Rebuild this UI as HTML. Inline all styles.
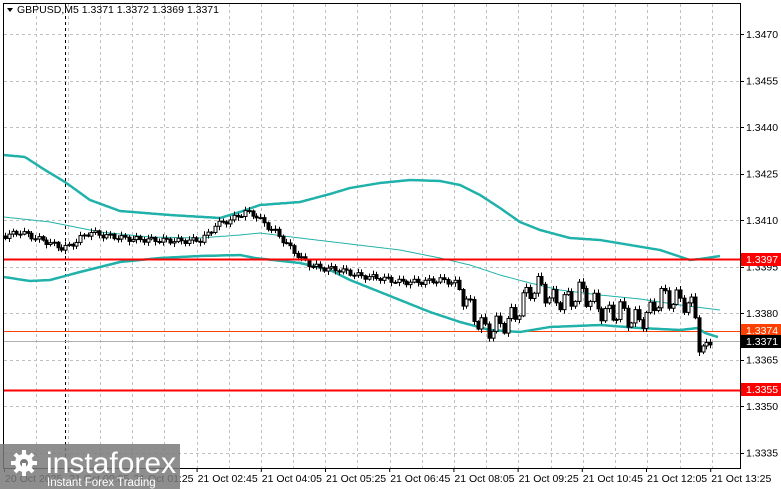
<!DOCTYPE html>
<html><head><meta charset="utf-8">
<style>
body{margin:0;width:781px;height:489px;background:#fff;overflow:hidden;position:relative;font-family:"Liberation Sans",sans-serif;}
svg{position:absolute;left:0;top:0}
.t{font-size:10.5px;fill:#000;font-family:"Liberation Sans",sans-serif}
</style></head><body>
<svg id="s" width="781" height="489" xmlns="http://www.w3.org/2000/svg">
<g id="grid" stroke="#c0c0c0" stroke-dasharray="3,3" stroke-width="1"></g>
<line x1="65.5" y1="4" x2="65.5" y2="468" stroke="#000" stroke-dasharray="3,3"/>
<line x1="4" y1="331.5" x2="740" y2="331.5" stroke="#ff4000" stroke-width="1"/>
<line x1="4" y1="341.5" x2="740" y2="341.5" stroke="#b0b0b0" stroke-width="1"/>
<g id="bands" fill="none" stroke="#20b2aa"></g>
<g id="candles"></g>
<line x1="4" y1="259.5" x2="740" y2="259.5" stroke="#ff0000" stroke-width="2"/>
<line x1="4" y1="390.5" x2="740" y2="390.5" stroke="#ff0000" stroke-width="2"/>
<rect x="3.5" y="3.5" width="737" height="465" fill="none" stroke="#000"/>
<g id="axis"></g>
<path d="M7 8 L13 8 L10 12 Z" fill="#000"/>
<text x="17" y="13" class="t" style="font-size:10.5px">GBPUSD,M5  1.3371 1.3372 1.3369 1.3371</text>
<rect x="741" y="253" width="40" height="13" fill="#ff0000"/>
<text x="746" y="263" class="t" style="fill:#fff">1.3397</text>
<rect x="741" y="324" width="40" height="13" fill="#ff4000"/>
<text x="746" y="334" class="t" style="fill:#fff">1.3374</text>
<rect x="741" y="335" width="40" height="13" fill="#000"/>
<text x="746" y="345" class="t" style="fill:#fff">1.3371</text>
<rect x="741" y="383" width="40" height="13" fill="#ff0000"/>
<text x="746" y="393" class="t" style="fill:#fff">1.3355</text>
<g>
<rect x="0" y="444" width="180" height="45" fill="#7a7a7a" opacity="0.85"/>
<g fill="#fff">
<circle cx="24" cy="463" r="9"/>
<g stroke="#fff" stroke-width="4">
<line x1="24" y1="450" x2="24" y2="476"/><line x1="11" y1="463" x2="37" y2="463"/>
<line x1="15" y1="454" x2="33" y2="472"/><line x1="33" y1="454" x2="15" y2="472"/>
</g>
<circle cx="24" cy="463" r="4" fill="#7a7a7a"/>
<rect x="22" y="463" width="4" height="12" fill="#fff"/>
<text x="46" y="473" style="font-family:'Liberation Sans',sans-serif;font-size:30px;fill:#fff">instaforex</text>
<text x="47" y="486" style="font-family:'Liberation Sans',sans-serif;font-size:11.5px;fill:#fff">Instant Forex Trading</text>
</g>
</g>
</svg>
<script>
(function(){
var NS="http://www.w3.org/2000/svg";
function el(p,t,a,txt){var e=document.createElementNS(NS,t);for(var k in a)e.setAttribute(k,a[k]);if(txt)e.textContent=txt;document.getElementById(p).appendChild(e);return e;}
for(var x=35.5;x<740;x+=32.2)el("grid","line",{x1:Math.round(x)+.5,y1:4,x2:Math.round(x)+.5,y2:468});
var prices=["1.3470","1.3455","1.3440","1.3425","1.3410","1.3395","1.3380","1.3365","1.3350","1.3335"];
for(var i=0;i<10;i++){var y=34+i*46.5;el("grid","line",{x1:4,y1:Math.round(y)+.5,x2:740,y2:Math.round(y)+.5});
el("axis","line",{x1:740,y1:Math.round(y)+.5,x2:744,y2:Math.round(y)+.5,stroke:"#000"});
el("axis","text",{x:746,y:y+4,"class":"t"},prices[i]);}
var tl=["20 Oct 2025","21 Oct 00:05","21 Oct 01:25","21 Oct 02:45","21 Oct 04:05","21 Oct 05:25","21 Oct 06:45","21 Oct 08:05","21 Oct 09:25","21 Oct 10:45","21 Oct 12:05","21 Oct 13:25"];
for(var i=0;i<12;i++){el("axis","text",{x:5+i*64.2,y:482,"class":"t"},tl[i]);el("axis","line",{x1:4.5+i*64.2,y1:468,x2:4.5+i*64.2,y2:472,stroke:"#000"});}
function interp(pts,x){for(var i=0;i<pts.length-1;i++){if(x<=pts[i+1][0]){var a=pts[i],b=pts[i+1];return a[1]+(b[1]-a[1])*(x-a[0])/(b[0]-a[0]);}}return pts[pts.length-1][1];}
function poly(pts,w){var s="";for(var x=4;x<=pts[pts.length-1][0];x+=2)s+=x+","+interp(pts,x).toFixed(1)+" ";el("bands","polyline",{points:s,"stroke-width":w});}
var up=[[4,155],[25,157],[45,170],[65,182],[90,200],[120,211],[170,215],[220,218],[240,212],[260,205],[300,202],[330,194],[350,188],[380,183],[410,180],[440,181],[460,185],[480,195],[500,208],[520,222],[540,230],[570,238],[600,240],[630,245],[660,250],[690,260],[700,259],[720,256]];
var mid=[[4,217],[50,222],[100,232],[150,237],[200,238],[240,235],[260,233],[300,238],[350,244],[400,250],[440,258],[470,265],[500,275],[530,283],[560,290],[600,295],[640,299],[680,305],[720,310]];
var lo=[[4,277],[30,281],[50,280],[80,272],[120,262],[160,258],[200,256],[240,255],[255,258],[300,263],[330,270],[350,280],[380,292],[400,300],[430,312],[460,322],[490,330],[520,332],[550,327],[600,325],[640,328],[680,330],[698,328],[705,333],[718,337]];
poly(up,2.5);poly(mid,1);poly(lo,2.5);
var cl=[[4,236],[20,232],[35,238],[50,243],[60,248],[70,246],[80,238],[90,232],[100,235],[130,239],[180,241],[200,240],[210,232],[215,225],[230,220],[245,212],[255,215],[265,225],[275,232],[290,248],[300,258],[310,265],[320,268],[340,270],[360,276],[380,278],[400,282],[420,282],[440,280],[455,283],[465,300],[475,318],[485,330],[495,327],[505,322],[515,315],[522,300],[530,290],[540,285],[550,300],[560,300],[570,300],[580,290],[590,300],[600,310],[610,315],[620,310],[630,320],[640,320],[650,312],[660,295],[670,300],[680,300],[690,305],[697,318],[700,350],[705,345],[712,342]];
var prev=236,k=0;
for(var x=5;x<=712;x+=3.75){k++;var c=interp(cl,x)+Math.sin(k*1.7)*3*(x>460&&x<700?3.5:0.9);if(x>697&&x<702)c=352;
var o=prev;var hi=Math.min(o,c)-1-Math.abs(Math.sin(k*2.3))*3,lw=Math.max(o,c)+1+Math.abs(Math.cos(k*1.3))*3;
var cx=Math.round(x)+.5;el("candles","line",{x1:cx,y1:hi,x2:cx,y2:lw,stroke:"#000"});
var bt=Math.min(o,c),h=Math.max(1,Math.abs(o-c));
el("candles","rect",{x:cx-1.5,y:bt,width:3,height:h,fill:c>o?"#000":"#fff",stroke:"#000","stroke-width":1});
prev=c;}
})();
</script>
</body></html>
